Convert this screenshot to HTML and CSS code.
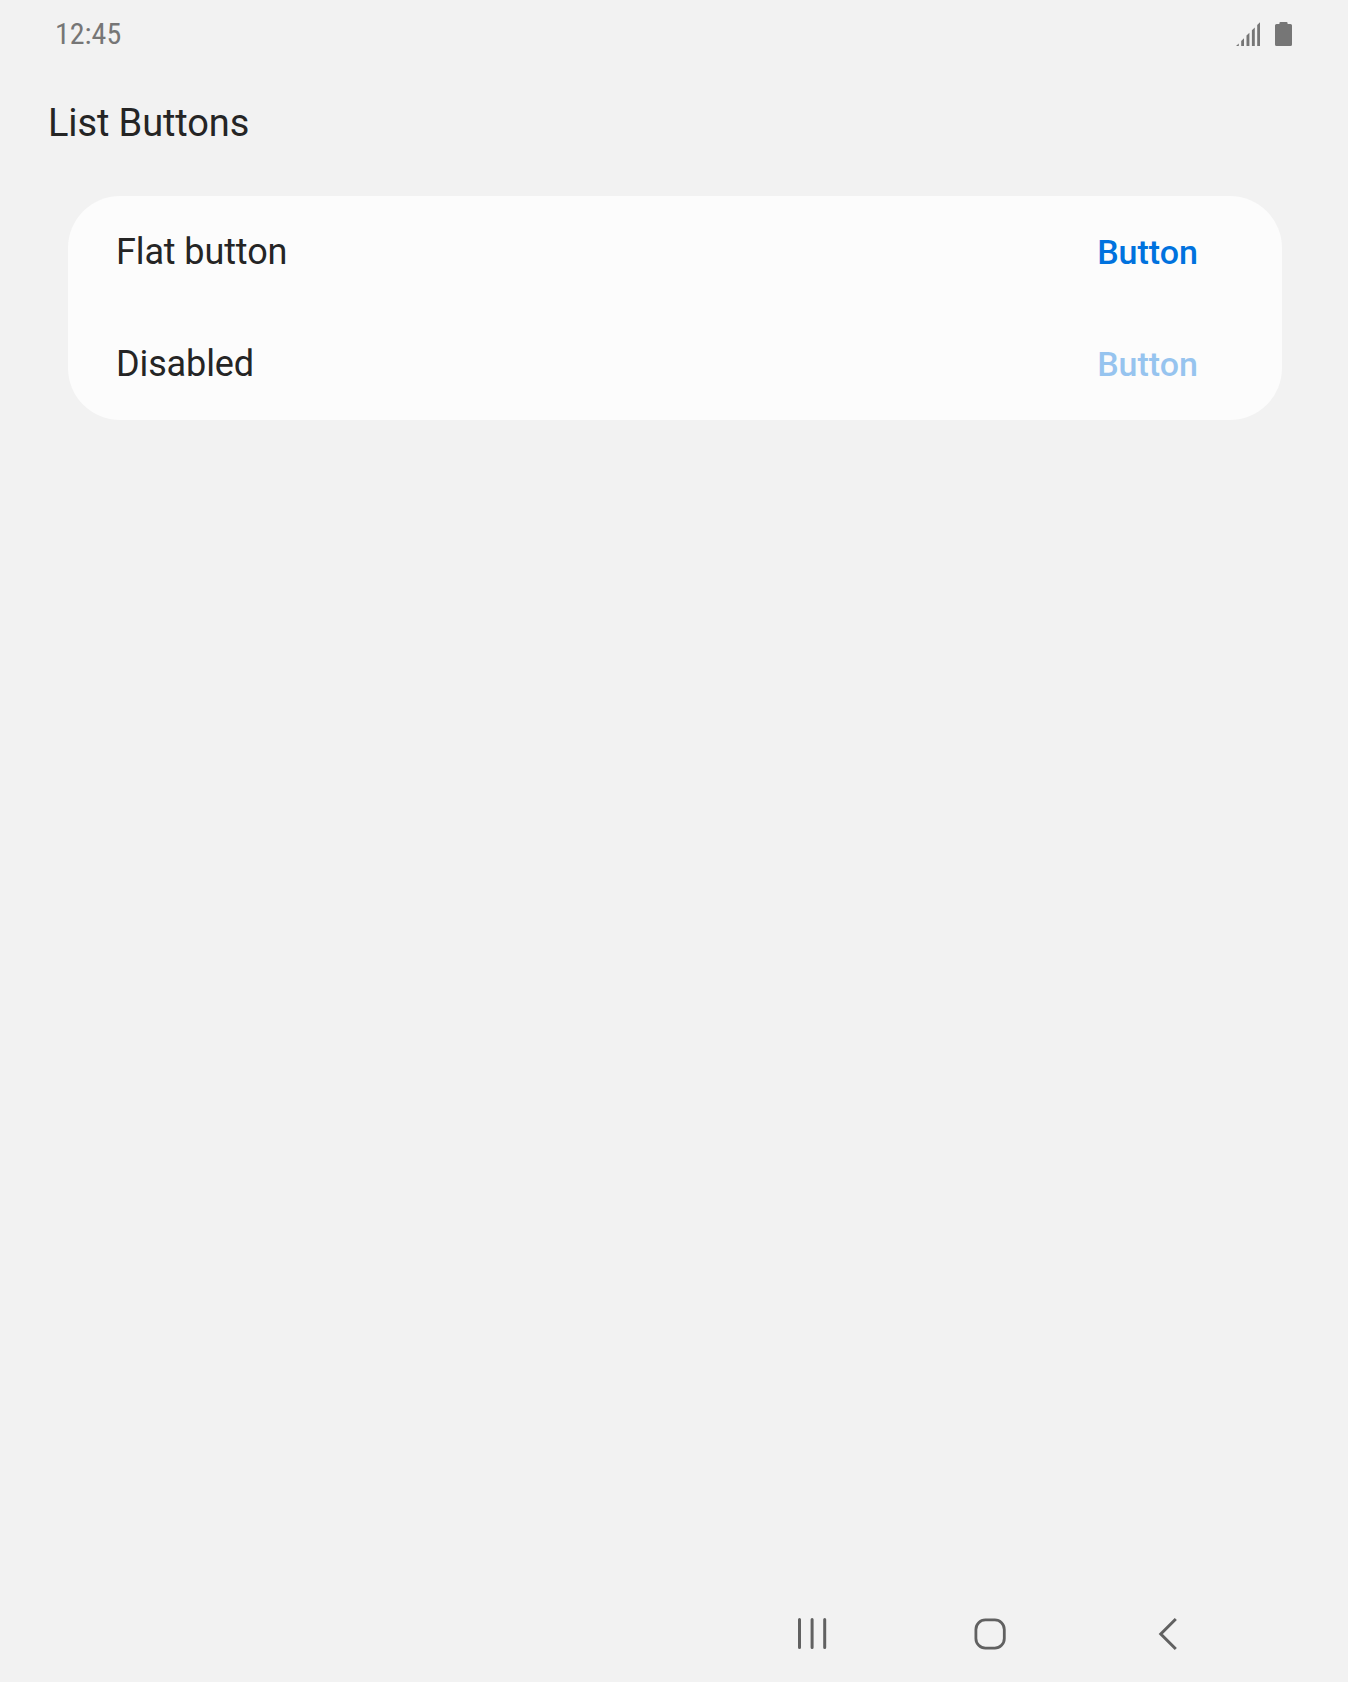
FILE: index.html
```html
<!DOCTYPE html>
<html lang="en">
<head>
<meta charset="utf-8">
<title>List Buttons</title>
<link rel="stylesheet" href="styles.css">
</head>
<body>
<div class="screen">
  <header class="status-bar">
    <span class="clock">12:45</span>
    <div class="status-icons">
      <svg class="signal" width="26" height="26" viewBox="0 0 26 26" fill="#767676">
        <path d="M0 26L2.8 23.5V26ZM5.2 26V21L8 18.2V26ZM10.5 26V15.5L13.4 12.8V26ZM15.9 26V10.3L18.8 7.5V26ZM21.2 26V5L24 2.2V26Z"/>
      </svg>
      <svg class="battery" width="17" height="26" viewBox="0 0 17 26" fill="#767676">
        <path d="M5.5 2H11.5Q12.6 2 12.6 3.2V4H15.5Q17 4 17 5.5V24.5Q17 26 15.5 26H1.5Q0 26 0 24.5V5.5Q0 4 1.5 4H4.4V3.2Q4.4 2 5.5 2Z"/>
      </svg>
    </div>
  </header>
  <h1 class="title">List Buttons</h1>
  <main class="card">
    <div class="row">
      <span class="label">Flat button</span>
      <button class="flat-button">Button</button>
    </div>
    <div class="row">
      <span class="label">Disabled</span>
      <button class="flat-button" disabled>Button</button>
    </div>
  </main>
  <nav class="nav-bar">
    <svg width="34" height="34" viewBox="0 0 34 34" fill="none" stroke="#616161" stroke-width="3" stroke-linecap="round">
      <path d="M4.5 2.5V30.5M17.1 2.5V30.5M29.7 2.5V30.5"/>
    </svg>
    <svg width="34" height="34" viewBox="0 0 34 34" fill="none" stroke="#616161" stroke-width="2.8">
      <rect x="2.9" y="2.9" width="28.4" height="28.2" rx="9.5"/>
    </svg>
    <svg width="34" height="34" viewBox="0 0 34 34" fill="none" stroke="#616161" stroke-width="3">
      <path d="M24.8 2L9.8 17L24.8 32"/>
    </svg>
  </nav>
</div>
</body>
</html>
```
FILE: styles.css
```css
body {
  margin: 0;
  background: #f2f2f2;
  color: #252525;
  font-family: Roboto, sans-serif;
}

.screen {
  display: flex;
  flex-direction: column;
  box-sizing: border-box;
  height: 1682px;
}

.status-bar {
  display: flex;
  justify-content: space-between;
  height: 68px;
  padding: 0 56px 0 55px;
  box-sizing: border-box;
}

.clock {
  font-family: "Roboto Condensed", Roboto, sans-serif;
  font-stretch: 75%;
  font-size: 30px;
  line-height: 68px;
  color: #767676;
}

.status-icons {
  display: flex;
  gap: 13px;
  padding-top: 20px;
}

.title {
  margin: 0;
  height: 128px;
  padding: 33px 48px 0;
  box-sizing: border-box;
  font-size: 38px;
  font-weight: 400;
  line-height: 44px;
  letter-spacing: -0.12px;
}

.card {
  margin: 0 66px 0 68px;
  border-radius: 52px;
  background: #fcfcfc;
}

.row {
  display: flex;
  align-items: center;
  justify-content: space-between;
  height: 112px;
  padding: 0 84px 0 48px;
}

.label {
  font-size: 36px;
  letter-spacing: -0.12px;
}

.flat-button {
  padding: 0;
  border: 0;
  background: none;
  color: #0072de;
  font: 500 34px Roboto, sans-serif;
}

.flat-button:disabled {
  opacity: 0.4;
}

.nav-bar {
  display: flex;
  gap: 144px;
  margin-top: auto;
  padding: 0 163px 31px 795px;
}
```
